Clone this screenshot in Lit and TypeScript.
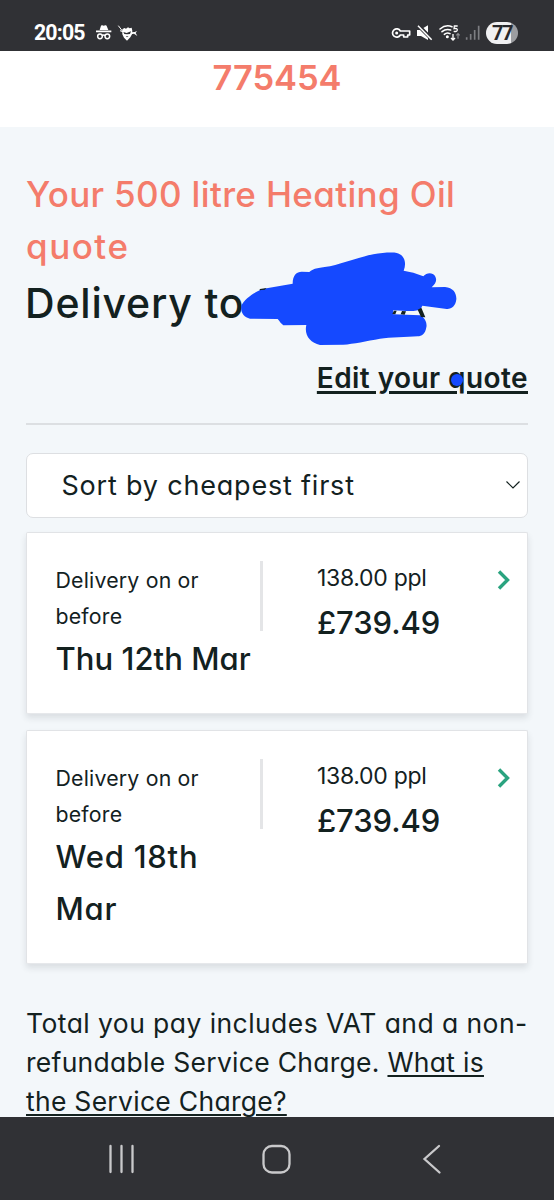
import { LitElement, html, css, svg } from "lit";
import { customElement, property } from "lit/decorators.js";

@customElement("status-bar")
export class StatusBar extends LitElement {
  static styles = css`
    :host {
      display: flex;
      align-items: center;
      height: 51px;
      box-sizing: border-box;
      padding: 15px 36px 0 34px;
      background: #303135;
      color: #fff;
      font-family: Roboto, sans-serif;
    }
    .time { font-size: 21.3px; font-weight: 700; line-height: 36px; letter-spacing: -0.85px; width: 52px; }
    .left { display: block; margin-left: 9px; }
    .right { display: flex; align-items: center; margin-left: auto; }
    svg { display: block; }
    .battery {
      width: 32px;
      height: 22px;
      margin-left: 2px;
      border-radius: 11px;
      background: linear-gradient(90deg, #f0f0f2 0 77%, #9c9da1 77%);
      color: #26272b;
      font-size: 20px;
      font-weight: 700;
      line-height: 22px;
      text-align: center;
      letter-spacing: -1.4px;
    }
  `;

  render() {
    return html`
      <span class="time">20:05</span>
      <svg class="left" width="44" height="20" viewBox="285 70 132 60" fill="#fff">
        <path d="M299 91 L303 78 Q304 76 307 77 L311 78.5 L316 77 Q319 76 320 79 L325 91 Z M288 92.5 H334 V97.5 H288 Z" />
        <g fill="none" stroke="#fff" stroke-width="4.5">
          <circle cx="300" cy="110" r="7" />
          <circle cx="322" cy="110" r="7" />
          <path d="M306 108 Q311 104 316 108" />
        </g>
        <path d="M367 89 L373 85 L378 87 L384 83 L389 86 L395 84 L397 93 L396 104 L391 113 L381 123 L372 114 L367 104 Z" />
        <path d="M355 78 L371 99 M360 93 L370 97" stroke="#fff" stroke-width="3" />
        <path d="M394 98 L404 97 L411 94 L407 100 L412 109 L402 102 L394 104 Z" />
        <path d="M370 97 L380 100 L393 95 L390 103 L381 104 L373 103 Z M377 110 H386 L381 113 Z" fill="#303135" />
      </svg>
      <div class="right">
        <svg width="93" height="20" viewBox="343 70 279 60" fill="none" stroke="#fff">
          <path stroke-width="5" stroke-linejoin="round"
            d="M371 94 A12.5 12.5 0 1 0 371 106 H381 V112 H393 V106 H399 V94 Z" />
          <circle cx="360" cy="100" r="4.5" fill="#fff" stroke="none" />
          <path fill="#fff" stroke="none" d="M421 91 H430 L454 115 V121 L433 109 H421 Z M436 87 L454 77 V104 Z" />
          <path stroke-width="5" stroke="#303135" d="M427 75 L468 117" />
          <path stroke-width="4.5" d="M424 78 L465 120" />
          <g stroke-width="4.8" stroke-linecap="round">
            <path d="M490 88 Q507 73 526 81" />
            <path d="M496 96 Q508 86 522 91" />
            <path d="M503 104 Q511 97 520 102" />
          </g>
          <circle cx="512" cy="111" r="4.5" fill="#fff" stroke="none" />
          <path stroke-width="3.8" d="M543 79 H533 L532 87 Q542 85 542 91 Q541 97 531 95" />
          <path stroke-width="4" d="M529 103 V121 M523 115 L529 121 L535 115" />
          <path stroke-width="3.5" stroke="#8c8d91" d="M544 117 V102 M539 107 L544 102 L549 107" />
          <g stroke="#7d7e82" stroke-width="5">
            <path d="M570 113 V120 M582 103 V120 M594 91 V120 M606 78 V120" />
          </g>
        </svg>
        <div class="battery">77</div>
      </div>
    `;
  }
}

@customElement("quote-card")
export class QuoteCard extends LitElement {
  @property() date = "";
  @property() rate = "";
  @property() price = "";

  static styles = css`
    :host {
      display: flex;
      align-items: flex-start;
      box-sizing: border-box;
      padding: 28px 15px 28px 28.5px;
      border: 1px solid #e1e3e6;
      border-bottom-color: #e6e8eb;
      border-radius: 2px;
      background: #fff;
      box-shadow: 0 4px 6px rgba(40, 50, 60, 0.12);
    }
    .when { width: 204.5px; }
    .label { margin: 1.5px 0 -1.5px; font-size: 21.3px; line-height: 36px; letter-spacing: 0.2px; width: 170px; }
    .date { font-size: 31px; font-weight: 500; line-height: 52px; letter-spacing: 0.05px; }
    .long .date { letter-spacing: 0.75px; width: 170px; }
    .rule { width: 3px; height: 70px; background: #e4e5e7; }
    .cost { margin-left: 54px; flex: 1; }
    .rate { font-size: 23px; line-height: 35px; letter-spacing: -0.3px; }
    .price { font-size: 31px; font-weight: 500; line-height: 54px; letter-spacing: -0.1px; }
    .go { display: block; margin: 7px 0 0; }
  `;

  render() {
    return html`
      <div class="when ${this.date.startsWith("Wed") ? "long" : ""}">
        <div class="label">Delivery on or before</div>
        <div class="date">${this.date}</div>
      </div>
      <div class="rule"></div>
      <div class="cost">
        <div class="rate">${this.rate}</div>
        <div class="price">${this.price}</div>
      </div>
      <svg class="go" width="15" height="24" viewBox="0 0 15 24" fill="none" stroke="#2aa37f" stroke-width="3.4">
        <path d="M2 3.5 L10.5 12 L2 20.5" />
      </svg>
    `;
  }
}

@customElement("app-root")
export class AppRoot extends LitElement {
  static styles = css`
    :host {
      display: flex;
      flex-direction: column;
      height: 1200px;
      overflow: hidden;
      background: #f3f7fa;
      color: #13211f;
      font-family: Inter, "Open Sans", sans-serif;
      font-feature-settings: "cv11";
    }
    .phone {
      height: 76px;
      box-sizing: border-box;
      background: #fff;
      color: #f47c6b;
      font-size: 34.5px;
      font-weight: 600;
      line-height: 53px;
      letter-spacing: -0.1px;
      text-align: center;
    }
    main { flex: 1; min-height: 0; overflow: hidden; padding: 41px 26px 0; }
    h1, h2, p { margin: 0; }
    h1 { color: #f47c6b; font-size: 35px; font-weight: 500; line-height: 52px; letter-spacing: 0.34px; }
    .last { letter-spacing: 1.5px; }
    .place { position: relative; }
    h2 { padding-top: 1px; font-size: 41px; font-weight: 500; line-height: 60px; letter-spacing: 0.8px; margin-left: -1px; }
    .scribble { position: absolute; left: 204px; top: -32px; }
    .dot { position: absolute; right: 65px; top: 17px; width: 12px; height: 12px; border-radius: 6px; background: #1549ff; }
    .edit {
      position: relative;
      margin-top: 24px;
      text-align: right;
      font-size: 28px;
      font-weight: 600;
      line-height: 42px;
      letter-spacing: 0.42px;
    }
    .link { text-decoration: underline; text-decoration-thickness: 2px; text-underline-offset: 3px; }
    .edit .link { text-decoration-thickness: 2.5px; }
    hr { margin: 24px 0 0; border: 0; height: 1.5px; background: #dcdfe2; }
    .select {
      display: flex;
      align-items: center;
      justify-content: space-between;
      box-sizing: border-box;
      width: 502px;
      height: 65px;
      margin-top: 28px;
      padding: 0 7px 0 34.5px;
      border: 1.5px solid #dddfe2;
      border-radius: 7px;
      background: #fff;
      font-size: 27px;
      letter-spacing: 0.8px;
    }
    .cards { display: flex; flex-direction: column; gap: 16px; margin-top: 14px; }
    .note { margin-top: 40px; font-size: 26.5px; line-height: 39px; letter-spacing: 0.28px; white-space: nowrap; }
    .first { letter-spacing: 0.43px; }
    nav { flex: none; height: 83px; background: #303135; }
    svg { display: block; }
  `;

  private scribble() {
    return svg`
      <path fill="#1549ff" d="M35 195 C45 175 80 150 110 145 L188 131 C188 105 200 95 215 95 L238 96 C250 85 270 83 300 79 C340 70 400 48 430 43 C460 37 490 37 500 39 C525 45 530 70 521 92 C540 95 560 100 580 109 C590 97 608 97 615 108 C622 120 618 130 605 142 L645 141 C670 143 680 160 679 178 C677 198 665 208 650 207 L577 197 L572 207 C565 212 550 214 530 213 L490 211 L490 223 L570 226 C585 232 592 250 589 262 C586 282 575 289 563 289 C530 291 480 292 450 296 C410 303 370 312 340 314 L270 315 C240 308 222 285 229 255 L160 256 C152 250 150 245 143 237 L60 236 C40 232 30 215 35 195Z" />
      <path fill="#13211f" d="M90 147 L110 144 L104 149 L88 151 Z M492 212 L500 212 L496 223 L487 222 Z M516 213 L528 214 L524 224 L512 223 Z M563 209 L574 203 L586 232 L573 231 Z" />
    `;
  }

  render() {
    return html`
      <status-bar></status-bar>
      <div class="phone">775454</div>
      <main>
        <h1>Your 500 litre Heating Oil<br /><span class="last">quote</span></h1>
        <div class="place">
          <h2>Delivery to</h2>
          <svg class="scribble" width="240" height="110" viewBox="0 0 720 330">${this.scribble()}</svg>
        </div>
        <div class="edit"><span class="link">Edit your quote</span><span class="dot"></span></div>
        <hr />
        <div class="select">
          <span>Sort by cheapest first</span>
          <svg width="14" height="10" viewBox="0 0 14 10" fill="none" stroke="#13211f" stroke-width="1.2">
            <path d="M0.5 1.5 L7 8 L13.5 1.5" />
          </svg>
        </div>
        <div class="cards">
          <quote-card date="Thu 12th Mar" rate="138.00 ppl" price="£739.49"></quote-card>
          <quote-card date="Wed 18th Mar" rate="138.00 ppl" price="£739.49"></quote-card>
        </div>
        <p class="note">
          <span class="first">Total you pay includes VAT and a non-</span><br />refundable Service Charge.
          <span class="link">What is<br />the Service Charge?</span>
        </p>
      </main>
      <nav>
        <svg width="554" height="83" viewBox="0 0 554 83" fill="none" stroke="#c9c9cb" stroke-width="2.3" stroke-linecap="round">
          <path d="M110.5 29 V55 M121.5 29 V55 M132.5 29 V55" />
          <rect x="263.5" y="29" width="26" height="26.5" rx="8.5" />
          <path d="M439 29 L424.5 42 L439.5 55.5" />
        </svg>
      </nav>
    `;
  }
}
